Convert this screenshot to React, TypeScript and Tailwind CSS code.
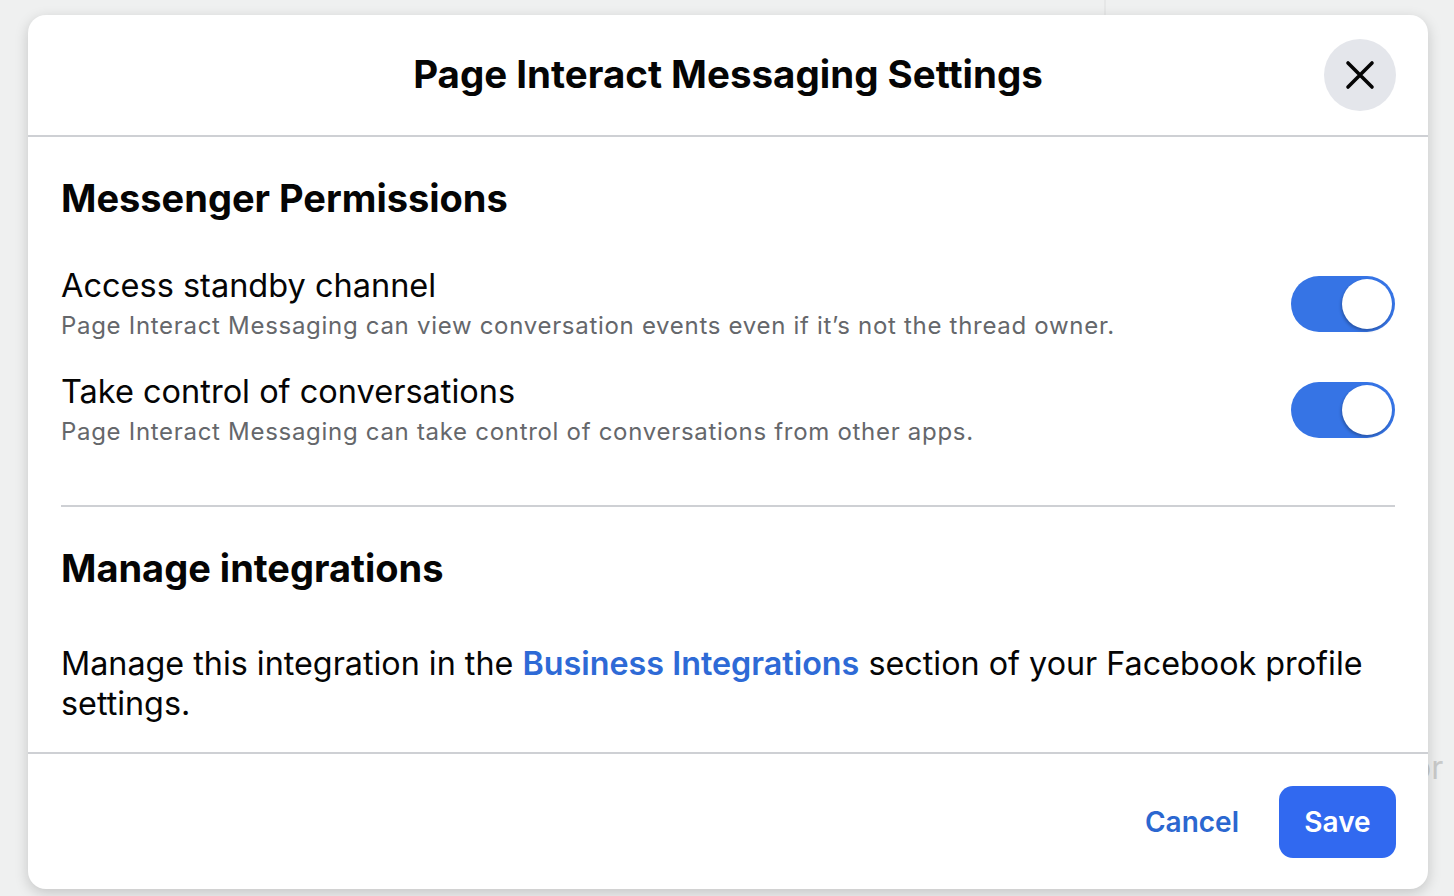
import React from "react";

function Toggle() {
  return (
    <div className="flex h-[56px] w-[104px] shrink-0 items-center justify-end rounded-full bg-[#3674e5] pr-[3px]">
      <div className="h-[50px] w-[50px] rounded-full bg-white shadow-[-1px_2px_3px_rgba(0,0,0,0.25)]" />
    </div>
  );
}

export default function App() {
  return (
    <div
      className="relative h-[896px] w-[1454px] overflow-hidden bg-[#eff0f0]"
      style={{ fontFamily: "Inter, 'Noto Sans', sans-serif" }}
    >
      <div className="absolute left-[1412px] top-[744px] text-[32px] text-[#c9caca]">or</div>
      <div className="absolute left-[1104px] top-0 h-[15px] w-[2px] bg-[#e6e7e7]" />
      <div className="relative flex h-full w-full items-start pl-[28px] pt-[15px]">
        <div className="flex h-[874px] w-[1400px] flex-col rounded-[18px] bg-white shadow-[0_4px_14px_rgba(0,0,0,0.18)]">
          {/* Header */}
          <div className="relative flex h-[122px] shrink-0 items-center justify-center border-b-2 border-[#ced0d4]">
            <h1 className="text-[38.5px] font-bold text-[#050505]">
              Page Interact Messaging Settings
            </h1>
            <button className="absolute right-[32px] top-[24px] flex h-[72px] w-[72px] items-center justify-center rounded-full bg-[#e4e6eb]">
              <svg width="30" height="30" viewBox="0 0 30 30">
                <path d="M3 3 L27 27 M27 3 L3 27" stroke="#050505" strokeWidth="3.6" strokeLinecap="round" />
              </svg>
            </button>
          </div>

          {/* Body */}
          <div className="flex flex-1 flex-col px-[33px]">
            <h2 className="mt-[38px] text-[38px] font-bold leading-[46px] text-[#050505]">
              Messenger Permissions
            </h2>

            <div className="mt-[45px] flex items-center justify-between">
              <div className="flex flex-col">
                <div className="text-[32.5px] leading-[40px] text-[#050505]">Access standby channel</div>
                <div className="mt-[4px] text-[24px] leading-[32px] tracking-[0.7px] text-[#65676b]">
                  Page Interact Messaging can view conversation events even if it’s not the thread owner.
                </div>
              </div>
              <Toggle />
            </div>

            <div className="mt-[30px] flex items-center justify-between">
              <div className="flex flex-col">
                <div className="text-[32.5px] leading-[40px] text-[#050505]">Take control of conversations</div>
                <div className="mt-[4px] text-[24px] leading-[32px] tracking-[0.7px] text-[#65676b]">
                  Page Interact Messaging can take control of conversations from other apps.
                </div>
              </div>
              <Toggle />
            </div>

            <div className="mt-[57px] h-[2px] w-full shrink-0 bg-[#ced0d4]" />

            <h2 className="mt-[38px] text-[38px] font-bold leading-[46px] text-[#050505]">
              Manage integrations
            </h2>

            <p className="mt-[53px] text-[32.3px] leading-[40px] text-[#050505]">
              Manage this integration in the{" "}
              <span className="font-semibold text-[#2e6ad6]">Business Integrations</span> section of your
              Facebook profile settings.
            </p>
          </div>

          {/* Footer */}
          <div className="flex h-[137px] shrink-0 items-center justify-end gap-[40px] border-t-2 border-[#ced0d4] px-[32px]">
            <button className="text-[28px] font-semibold text-[#2b67d0]">Cancel</button>
            <button className="flex h-[72px] w-[117px] items-center justify-center rounded-[14px] bg-[#3169f0] text-[28px] font-semibold text-white">
              Save
            </button>
          </div>
        </div>
      </div>
    </div>
  );
}
